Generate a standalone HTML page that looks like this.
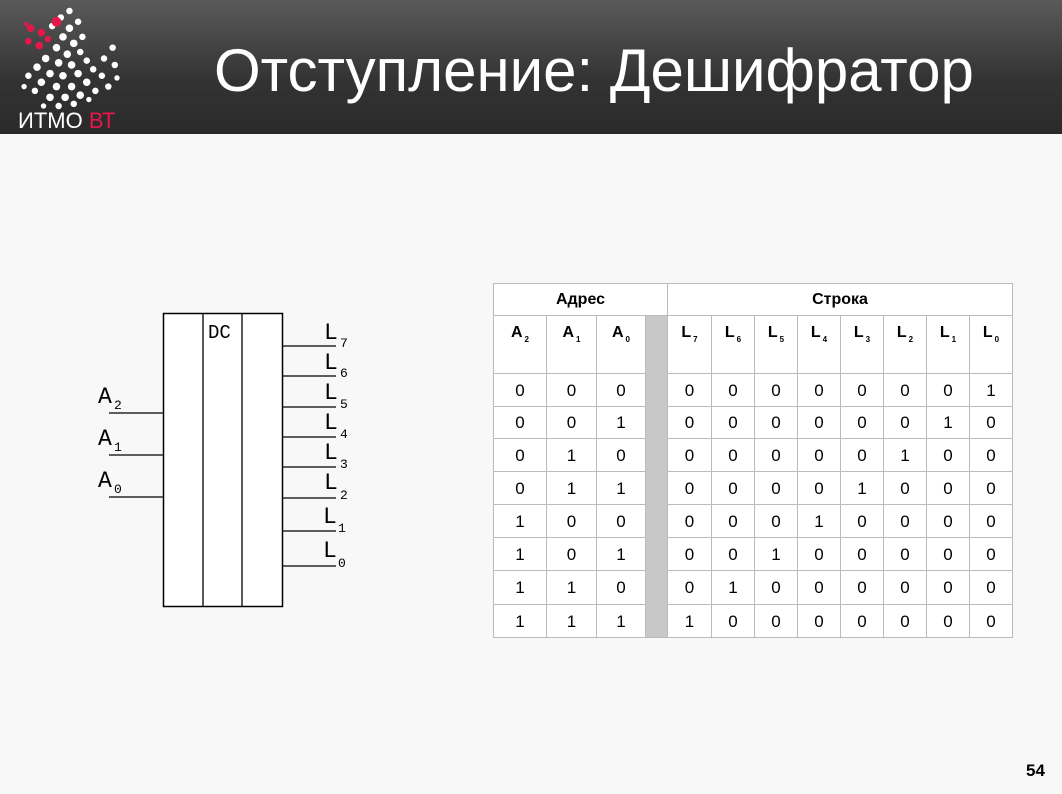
<!DOCTYPE html><html><head><meta charset="utf-8"><style>
body{margin:0;width:1062px;height:794px;background:#f8f8f8;position:relative;overflow:hidden;font-family:"Liberation Sans",sans-serif}
#hdr{position:absolute;left:0;top:0;width:1062px;height:134px;background:linear-gradient(#5a5a5a,#333 60%,#2a2a2a)}
#title{position:absolute;left:214px;top:36px;font-size:60px;color:#fff;white-space:nowrap}
.c{position:absolute;border-right:1px solid #bbb;border-bottom:1px solid #bbb;box-sizing:border-box;text-align:center;font-size:17px;color:#000}
.h{font-weight:bold;font-size:16px}
sub{font-size:8px;font-weight:bold;vertical-align:-5px;margin-left:2px}
</style></head><body>
<div id="hdr"></div>
<svg style="position:absolute;left:0;top:0" width="200" height="134">
<g fill="#fff" transform="translate(-4,-2) scale(1.08)">
<circle cx="60" cy="18" r="3"/><circle cx="68" cy="12" r="3"/><circle cx="52" cy="26" r="3"/><circle cx="68" cy="28" r="3.5"/><circle cx="76" cy="22" r="3"/><circle cx="62" cy="36" r="3.5"/><circle cx="72" cy="42" r="3.5"/><circle cx="80" cy="36" r="3"/><circle cx="56" cy="46" r="3.5"/><circle cx="66" cy="52" r="3.5"/><circle cx="78" cy="50" r="3"/><circle cx="46" cy="56" r="3.5"/><circle cx="58" cy="60" r="3.5"/><circle cx="70" cy="62" r="3.5"/><circle cx="84" cy="58" r="3"/><circle cx="38" cy="64" r="3.5"/><circle cx="50" cy="70" r="3.5"/><circle cx="62" cy="72" r="3.5"/><circle cx="76" cy="70" r="3.5"/><circle cx="90" cy="66" r="3"/><circle cx="30" cy="72" r="3"/><circle cx="42" cy="78" r="3.5"/><circle cx="56" cy="82" r="3.5"/><circle cx="70" cy="82" r="3.5"/><circle cx="84" cy="78" r="3.5"/><circle cx="98" cy="72" r="3"/><circle cx="100" cy="56" r="3"/><circle cx="108" cy="46" r="3"/><circle cx="110" cy="62" r="3"/><circle cx="104" cy="82" r="3"/><circle cx="36" cy="86" r="3"/><circle cx="50" cy="92" r="3.5"/><circle cx="64" cy="92" r="3.5"/><circle cx="78" cy="90" r="3.5"/><circle cx="92" cy="86" r="3"/><circle cx="44" cy="100" r="2.5"/><circle cx="58" cy="100" r="3"/><circle cx="72" cy="98" r="3"/><circle cx="86" cy="94" r="2.5"/><circle cx="26" cy="82" r="2.5"/><circle cx="112" cy="74" r="2.5"/></g>
<g fill="#e8174a" transform="translate(-4,-2) scale(1.08)"><circle cx="32" cy="28" r="3.5"/><circle cx="42" cy="32" r="3.5"/><circle cx="56" cy="22" r="4.5"/><circle cx="30" cy="40" r="3"/><circle cx="40" cy="44" r="3.5"/><circle cx="48" cy="38" r="3"/><circle cx="28" cy="24" r="2"/></g>
<text x="18" y="128" font-family="Liberation Sans" font-size="22" fill="#fff">ИТМО <tspan fill="#e8174a">ВТ</tspan></text>
</svg>
<div id="title">Отступление: Дешифратор</div>

<svg style="position:absolute;left:0;top:0" width="480" height="794" font-family="Liberation Mono" font-size="19">
<g fill="#fff" stroke="#000" stroke-width="1.5"><rect x="163.5" y="313.5" width="119" height="293"/></g>
<g stroke="#000" stroke-width="1.3">
<line x1="203" y1="313" x2="203" y2="606"/><line x1="242" y1="313" x2="242" y2="606"/>
<line x1="109" y1="413" x2="163" y2="413"/><line x1="109" y1="455" x2="163" y2="455"/><line x1="109" y1="497" x2="163" y2="497"/>
<line x1="282" y1="346" x2="336" y2="346"/><line x1="282" y1="376" x2="336" y2="376"/><line x1="282" y1="407" x2="336" y2="407"/><line x1="282" y1="437" x2="336" y2="437"/><line x1="282" y1="467" x2="336" y2="467"/><line x1="282" y1="498" x2="336" y2="498"/><line x1="282" y1="531" x2="336" y2="531"/><line x1="282" y1="566" x2="336" y2="566"/>
</g>
<text x="208" y="338">DC</text>
<g font-size="23"><text x="98" y="403">A</text><text x="98" y="445">A</text><text x="98" y="487">A</text></g>
<g font-size="13"><text x="114" y="409">2</text><text x="114" y="451">1</text><text x="114" y="493">0</text></g>
<g font-size="23"><text x="324" y="339">L</text><text x="324" y="369">L</text><text x="324" y="399">L</text><text x="324" y="429">L</text><text x="324" y="459">L</text><text x="324" y="489">L</text><text x="323" y="523">L</text><text x="323" y="557">L</text></g>
<g font-size="13"><text x="340" y="347">7</text><text x="340" y="377">6</text><text x="340" y="408">5</text><text x="340" y="438">4</text><text x="340" y="468">3</text><text x="340" y="499">2</text><text x="338" y="532">1</text><text x="338" y="567">0</text></g>
</svg>

<div style="position:absolute;left:493px;top:283px;width:520px;height:355px;background:#fff;border-left:1px solid #bbb;border-top:1px solid #bbb;box-sizing:border-box"></div>
<div class="c h" style="left:493px;top:283px;width:175px;height:33px;line-height:31px;border-left:1px solid #bbb;border-top:1px solid #bbb">Адрес</div>
<div class="c h" style="left:668px;top:283px;width:345px;height:33px;line-height:31px;border-top:1px solid #bbb">Строка</div>
<div style="position:absolute;left:646px;top:316px;width:22px;height:322px;background:#c8c8c8;border-right:1px solid #bbb;border-bottom:1px solid #bbb;box-sizing:border-box"></div>
<div id="tb"></div>
<script>
var xs=[493,547,597,646],lx=[668,712,755,798,841,884,927,970,1013],rows=[374,407,439,472,505,538,571,605,638];
var h='';
function cell(x,y,w,ht,t,cls,lh){h+='<div class="c '+cls+'" style="left:'+x+'px;top:'+y+'px;width:'+w+'px;height:'+ht+'px;line-height:'+lh+'px;'+(x==493?'border-left:1px solid #bbb;':'')+'">'+t+'</div>';}
var an=['2','1','0'];
for(var i=0;i<3;i++)cell(xs[i],316,xs[i+1]-xs[i],58,'A<sub>'+an[i]+'</sub>','h',34);
for(var j=0;j<8;j++)cell(lx[j],316,lx[j+1]-lx[j],58,'L<sub>'+(7-j)+'</sub>','h',34);
for(var r=0;r<8;r++){var y=rows[r],hh=rows[r+1]-y;
for(var i=0;i<3;i++)cell(xs[i],y,xs[i+1]-xs[i],hh,(r>>(2-i))&1,'',hh);
for(var j=0;j<8;j++)cell(lx[j],y,lx[j+1]-lx[j],hh,(7-j)==r?1:0,'',hh);}
document.getElementById('tb').innerHTML=h;
</script>
<div style="position:absolute;left:1026px;top:761px;font-size:17px;font-weight:bold">54</div>
</body></html>
